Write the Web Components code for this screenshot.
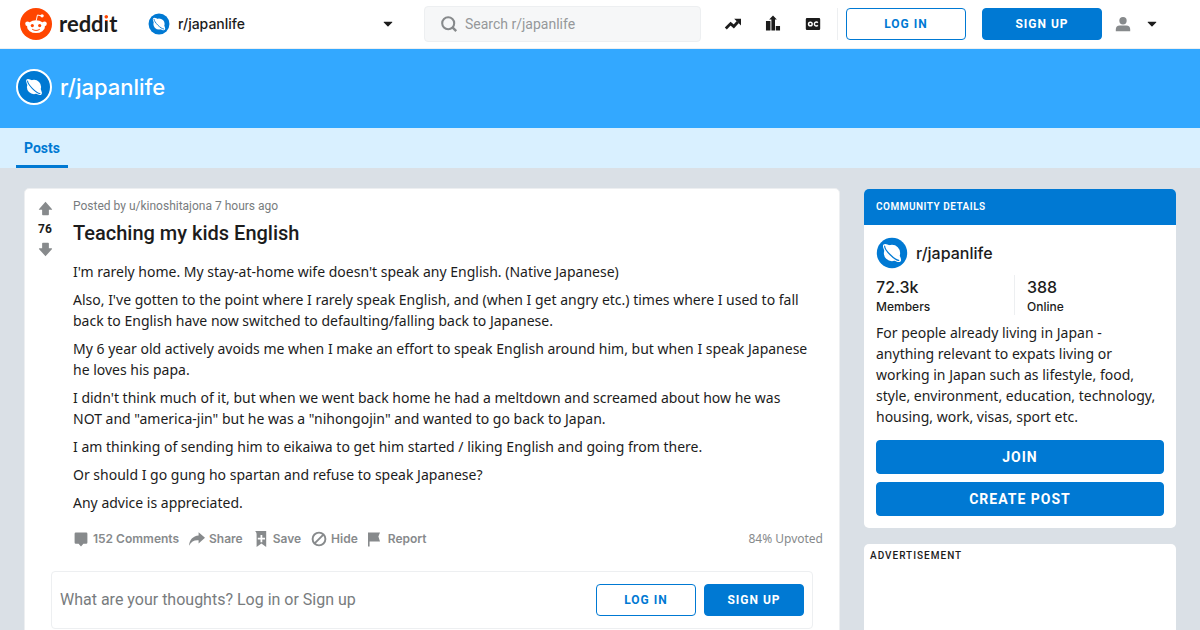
<!DOCTYPE html>
<html lang="en">
<head>
<meta charset="utf-8">
<meta name="viewport" content="width=device-width, initial-scale=1">
<title>Teaching my kids English : japanlife</title>
<style>
  :root {
    --name: Inter, "Noto Sans", sans-serif;
    --ui: Roboto, "Noto Sans", sans-serif;
    --body: "Noto Sans", "Open Sans", sans-serif;
    --blue: #0079d3;
    --banner: #33a8ff;
    --ink: #1c1c1c;
    --muted: #878a8c;
    --line: #edeff1;
  }
  body { margin: 0; background: #dae0e6; color: var(--ink); font: 14px/21px var(--ui); }
</style>
</head>
<body>
<reddit-app></reddit-app>

<script>
const define = (name, html) => {
  const template = document.createElement('template');
  template.innerHTML = '<style>*{box-sizing:border-box}:host{display:block;box-sizing:border-box}</style>' + html;
  customElements.define(name, class extends HTMLElement {
    constructor() {
      super();
      this.attachShadow({ mode: 'open' }).append(template.content.cloneNode(true));
    }
  });
};

const ICONS = {
  trend: ['0 0 20 20', '<path d="M1 15.500 7 9.500l4 3.500 5-5.500" fill="none" stroke="currentColor" stroke-width="3.600"/><path d="M11.500 3.500H20v8.500z"/>'],
  chart: ['0 0 20 20', '<path d="M1.200 6.200h5.600V18H1.200zM13.500 12.500h5.300V18h-5.300zM8 18V4.500H5.200L10-.5l4.800 5H12.500V18z"/>'],
  oc: ['0 0 20 20', '<path d="M2.500 2.500h15A1.500 1.500 0 0 1 19 4v12a1.500 1.500 0 0 1-1.500 1.500h-15A1.500 1.500 0 0 1 1 16V4a1.500 1.500 0 0 1 1.500-1.500z"/><circle cx="6.700" cy="10" r="2.300" fill="none" stroke="#fff" stroke-width="1.800"/><path d="M16 8.500a2.400 2.400 0 1 0 0 3" fill="none" stroke="#fff" stroke-width="1.800"/>'],
  search: ['0 0 20 20', '<circle cx="9" cy="9" r="7.500" fill="none" stroke="currentColor" stroke-width="2.600"/><path d="m14 14 5 5" stroke="currentColor" stroke-width="3"/>'],
  user: ['0 0 20 20', '<circle cx="10" cy="6" r="4.600"/><path d="M1 19v-2a5 5 0 0 1 5-5h8a5 5 0 0 1 5 5v2z"/>'],
  caret: ['0 0 20 20', '<path d="M2.500 5.500h15c1.200 0 1.600 1 .8 1.700l-7.400 7.400a1.500 1.500 0 0 1-1.900 0L1.700 7.200c-.8-.7-.4-1.700.8-1.700z"/>'],
  up: ['0 0 20 20', '<path d="M10 1 1.500 10.500c-.6.700-.3 1.300.5 1.300h3.500V18c0 .6.400 1 1 1h7c.6 0 1-.4 1-1v-6.200H18c.8 0 1.100-.6.500-1.300z"/>'],
  down: ['0 0 20 20', '<path d="m10 19 8.500-9.500c.6-.7.300-1.300-.5-1.300h-3.500V2c0-.6-.4-1-1-1h-7c-.6 0-1 .4-1 1v6.200H2c-.8 0-1.100.6-.5 1.300z"/>'],
  comment: ['0 0 20 20', '<path d="M3.500 2h13A1.500 1.500 0 0 1 18 3.500v11a1.500 1.500 0 0 1-1.500 1.500H13l-3 3.500L7 16H3.500A1.500 1.500 0 0 1 2 14.500v-11A1.500 1.500 0 0 1 3.500 2z"/>'],
  share: ['0 0 20 20', '<path d="M12 1.500 20 8.500l-8 7V11.500C6.500 11 3 13 0 18.500.5 11 5 6 12 5.500z"/>'],
  save: ['0 0 20 20', '<path fill-rule="evenodd" d="M2.500 0h14v20L10.500 15.500 4.500 20V4.500C4.500 2 3.500 1 2.500 0zM9.400 5v3.400H6v2.200h3.400V14h2.200v-3.400H15V8.400h-3.400V5z"/>'],
  hide: ['0 0 20 20', '<circle cx="10" cy="10" r="8" fill="none" stroke="currentColor" stroke-width="2.400"/><path d="M15.800 4.200 4.200 15.800" stroke="currentColor" stroke-width="2.400"/>'],
  report: ['0 0 20 20', '<path d="M0 2h15L13 7l2 6H2v6.500H0z"/>'],
  planet: ['0 0 40 40', '<circle cx="20" cy="20" r="19" fill="#0079d3"/><g transform="rotate(45 20 20)" fill="#fff"><ellipse cx="20" cy="20" rx="15" ry="5.500"/><circle cx="20" cy="20" r="10.200"/><path d="M7.500 20.500C11 24 29 24 32.500 20.500" fill="none" stroke="#0079d3" stroke-width="1.500" stroke-linecap="round"/></g>'],
  snoo: ['0 0 20 20', '<circle cx="10" cy="10" r="10" fill="#ff4500"/><g fill="#fff"><circle cx="4.700" cy="9.900" r="1.450"/><circle cx="15.300" cy="9.900" r="1.450"/><ellipse cx="10" cy="11.700" rx="5.600" ry="4"/><circle cx="13.800" cy="4.900" r="1.050"/></g><path d="m10.100 8 .8-3.600 2.700.5" fill="none" stroke="#fff" stroke-width=".6"/><circle cx="7.700" cy="11" r="1" fill="#ff4500"/><circle cx="12.300" cy="11" r="1" fill="#ff4500"/><path d="M7.800 13.400c1.200.9 3.200.9 4.400 0" fill="none" stroke="#ff4500" stroke-width=".6" stroke-linecap="round"/>']
};

customElements.define('ui-icon', class extends HTMLElement {
  constructor() { super(); this.attachShadow({ mode: 'open' }); }
  connectedCallback() {
    const [box, art] = ICONS[this.getAttribute('name')];
    this.shadowRoot.innerHTML = `<style>:host{display:block;flex:none;width:16px;height:16px}svg{display:block;width:100%;height:100%;overflow:visible}</style><svg viewBox="${box}" fill="currentColor" aria-hidden="true">${art}</svg>`;
  }
});

define('ui-button', `
  <style>
    button { display: block; width: 100%; height: var(--h, 32px); padding: 0; border: 1px solid var(--blue); border-radius: 4px; background: var(--blue); color: #fff; font: 700 var(--fs, 12px)/16px var(--ui); letter-spacing: 1px; cursor: pointer; }
    :host([outline]) button { background: #fff; color: var(--blue); }
  </style>
  <button type="button"><slot></slot></button>`);

define('site-header', `
  <style>
    header { display: flex; align-items: center; height: 49px; padding: 0 16px 0 20px; background: #fff; border-bottom: 1px solid var(--line); }
    .logo { display: flex; align-items: center; gap: 7px; color: var(--ink); text-decoration: none; width: 128px; }
    .logo ui-icon { width: 32px; height: 32px; }
    .word { font: 700 22px/32px Lato, sans-serif; }
    .i { background: linear-gradient(#ff4500 11px, var(--ink) 11px); -webkit-background-clip: text; background-clip: text; color: transparent; }
    .place { display: flex; align-items: center; gap: 8px; width: 245px; border: 0; padding: 0; background: none; font: 500 14px/20px var(--name); color: var(--ink); }
    .place ui-icon { width: 22px; height: 22px; }
    .place ui-icon.caret, .me .caret { width: 10px; height: 10px; }
    .place span { flex: 1; text-align: left; }
    .search { display: flex; align-items: center; gap: 8px; flex: 1; height: 36px; margin: 0 24px 0 31px; padding: 0 16px; border: 1px solid var(--line); border-radius: 4px; background: #f6f7f8; color: var(--muted); }
    .search input { flex: 1; min-width: 0; border: 0; padding: 0; outline: 0; background: none; font: 400 14px/20px var(--ui); }
    .search input::placeholder { color: #95989a; opacity: 1; }
    nav { display: flex; gap: 24px; padding-right: 16px; border-right: 1px solid var(--line); height: 32px; align-items: center; }
    nav a { color: var(--ink); }
    .auth { display: flex; gap: 16px; margin: 0 13px 0 8px; }
    .auth ui-button { width: 120px; }
    .me { display: flex; align-items: center; gap: 16px; margin-right: 27px; padding: 0; border: 0; background: none; color: var(--muted); }
    .me .caret { color: var(--ink); }
  </style>
  <header>
    <a class="logo" href="#" aria-label="reddit home"><ui-icon name="snoo"></ui-icon><span class="word">redd<span class="i">i</span>t</span></a>
    <button class="place" type="button"><ui-icon name="planet"></ui-icon><span>r/japanlife</span><ui-icon class="caret" name="caret"></ui-icon></button>
    <label class="search"><ui-icon name="search"></ui-icon><input type="search" placeholder="Search r/japanlife" aria-label="Search r/japanlife"></label>
    <nav>
      <a href="#" aria-label="Popular"><ui-icon name="trend"></ui-icon></a>
      <a href="#" aria-label="All"><ui-icon name="chart"></ui-icon></a>
      <a href="#" aria-label="Original content"><ui-icon name="oc"></ui-icon></a>
    </nav>
    <div class="auth"><ui-button outline>LOG IN</ui-button><ui-button>SIGN UP</ui-button></div>
    <button class="me" type="button" aria-label="Account menu"><ui-icon name="user"></ui-icon><ui-icon class="caret" name="caret"></ui-icon></button>
  </header>`);

define('community-banner', `
  <style>
    .banner { display: flex; align-items: center; gap: 8px; height: 79px; padding: 0 16px 3px; background: var(--banner); color: #fff; }
    .badge { border: 2px solid #fff; border-radius: 50%; background: var(--blue); padding: 2px; }
    .badge ui-icon { width: 28px; height: 28px; }
    h2 { margin: 0; font: 500 22px/28px var(--name); }
    nav { height: 40px; padding: 0 16px; background: #d9f0ff; display: flex; }
    a { padding: 0 8px; border-bottom: 3px solid var(--blue); color: var(--blue); font: 700 14px/40px var(--ui); text-decoration: none; }
  </style>
  <div class="banner"><div class="badge"><ui-icon name="planet"></ui-icon></div><h2><slot></slot></h2></div>
  <nav><a href="#">Posts</a></nav>`);

define('vote-box', `
  <style>
    :host { width: 40px; padding-top: 12px; }
    div { display: flex; flex-direction: column; align-items: center; gap: 4px; font: 700 12px/18px var(--ui); }
    button { padding: 0; border: 0; background: none; color: var(--muted); }
    ui-icon { width: 15px; height: 15px; }
  </style>
  <div>
    <button type="button" aria-label="Upvote"><ui-icon name="up"></ui-icon></button>
    <slot></slot>
    <button type="button" aria-label="Downvote"><ui-icon name="down"></ui-icon></button>
  </div>`);

define('post-action', `
  <style>
    button { display: flex; align-items: center; gap: 4px; padding: 0; border: 0; background: none; color: var(--muted); font: 600 12px/16px var(--name); }
  </style>
  <button type="button"><slot name="icon"></slot><slot></slot></button>`);

define('post-card', `
  <style>
    :host { background: #fff; border: 1px solid #edeff1; border-radius: 5px; }
    .post { display: grid; grid-template-columns: 40px 1fr; column-gap: 8px; }
    .meta { padding-top: 9px; font: 400 12px/16px var(--ui); color: #787c7e; }
    .meta a { color: inherit; text-decoration: none; }
    h1 { margin: 7px 0 16px; font: 500 20px/24px var(--ui); }
    .text { padding-right: 28px; font: 400 14px/21px var(--body); }
    ::slotted(p) { margin: 0 0 7px; }
    .bar { display: flex; align-items: center; gap: 10px; padding: 11px 16px 0 0; }
    .bar small { margin-left: auto; font: 400 12px/16px var(--body); color: var(--muted); }
    .prompt { display: flex; align-items: center; gap: 8px; margin: 24px 26px; padding: 12px 8px; border: 1px solid var(--line); border-radius: 4px; }
    .prompt span { flex: 1; font: 400 16px/24px var(--ui); color: #787c7e; }
    .prompt ui-button { width: 100px; }
  </style>
  <article>
    <div class="post">
      <vote-box>76</vote-box>
      <div>
        <div class="meta">Posted by <a href="#">u/kinoshitajona</a> <a href="#">7 hours ago</a></div>
        <h1>Teaching my kids English</h1>
        <div class="text"><slot></slot></div>
        <div class="bar">
          <post-action><ui-icon slot="icon" name="comment"></ui-icon>152 Comments</post-action>
          <post-action><ui-icon slot="icon" name="share"></ui-icon>Share</post-action>
          <post-action><ui-icon slot="icon" name="save"></ui-icon>Save</post-action>
          <post-action><ui-icon slot="icon" name="hide"></ui-icon>Hide</post-action>
          <post-action><ui-icon slot="icon" name="report"></ui-icon>Report</post-action>
          <small>84% Upvoted</small>
        </div>
      </div>
    </div>
    <div class="prompt"><span>What are your thoughts? Log in or Sign up</span><ui-button outline>LOG IN</ui-button><ui-button>SIGN UP</ui-button></div>
  </article>`);

define('community-card', `
  <style>
    :host { background: #fff; border-radius: 5px; overflow: hidden; }
    h2 { margin: 0; padding: 10px 12px; background: var(--blue); color: #fff; font: 600 10px/16px var(--ui); letter-spacing: .5px; }
    .in { padding: 12px; }
    .name { display: flex; align-items: center; gap: 8px; font: 500 16px/32px var(--name); color: inherit; text-decoration: none; }
    .name ui-icon { width: 32px; height: 32px; }
    .stats { display: grid; grid-template-columns: 1fr 1fr; gap: 12px; margin: 6px 0 7px; padding-right: 12px; }
    .stats div + div { border-left: 1px solid var(--line); padding-left: 12px; margin-left: -6px; }
    b { display: block; font: 500 16px/24px var(--name); }
    i { display: block; font: 500 12px/16px var(--name); }
    p { margin: 0 0 13px; padding-right: 6px; font: 400 14px/21px var(--body); }
    ui-button { --h: 34px; --fs: 14px; margin-top: 8px; }
  </style>
  <h2>COMMUNITY DETAILS</h2>
  <div class="in">
    <a class="name" href="#"><ui-icon name="planet"></ui-icon>r/japanlife</a>
    <div class="stats"><div><b>72.3k</b><i>Members</i></div><div><b>388</b><i>Online</i></div></div>
    <p><slot></slot></p>
    <ui-button>JOIN</ui-button>
    <ui-button>CREATE POST</ui-button>
  </div>`);

define('ad-card', `
  <style>
    :host { background: #fff; border-radius: 5px; min-height: 280px; padding: 4px 6px; font: 500 10px/16px var(--ui); letter-spacing: 1px; }
  </style>
  <slot></slot>`);

define('reddit-app', `
  <style>
    main { display: grid; grid-template-columns: minmax(0, 1fr) 312px; gap: 24px; padding: 20px 24px; }
    aside { display: flex; flex-direction: column; gap: 16px; padding-top: 1px; }
  </style>
  <site-header></site-header>
  <community-banner>r/japanlife</community-banner>
  <main>
    <post-card>
      <p>I'm rarely home. My stay-at-home wife doesn't speak any English. (Native Japanese)</p>
      <p>Also, I've gotten to the point where I rarely speak English, and (when I get angry etc.) times where I used to fall back to English have now switched to defaulting/falling back to Japanese.</p>
      <p>My 6 year old actively avoids me when I make an effort to speak English around him, but when I speak Japanese he loves his papa.</p>
      <p>I didn't think much of it, but when we went back home he had a meltdown and screamed about how he was NOT and "america-jin" but he was a "nihongojin" and wanted to go back to Japan.</p>
      <p>I am thinking of sending him to eikaiwa to get him started / liking English and going from there.</p>
      <p>Or should I go gung ho spartan and refuse to speak Japanese?</p>
      <p>Any advice is appreciated.</p>
    </post-card>
    <aside>
      <community-card>For people already living in Japan - anything relevant to expats living or working in Japan such as lifestyle, food, style, environment, education, technology, housing, work, visas, sport etc.</community-card>
      <ad-card>ADVERTISEMENT</ad-card>
    </aside>
  </main>`);
</script>
</body>
</html>
